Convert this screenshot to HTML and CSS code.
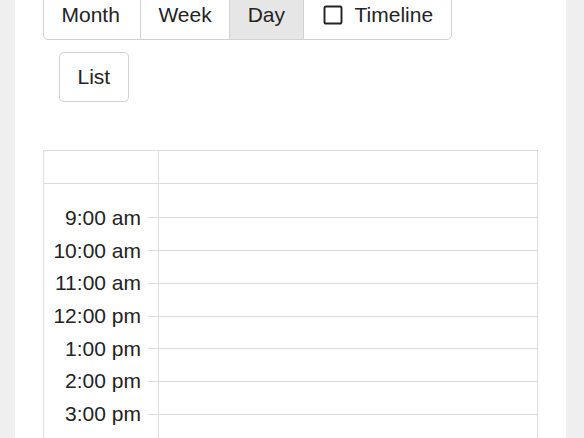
FILE: index.html
```html
<!DOCTYPE html>
<html>
<head>
<meta charset="utf-8">
<link rel="stylesheet" href="styles.css">
</head>
<body>
<div class="panel">
  <div class="toolbar">
    <div class="btn-group">
      <button class="btn">Month</button>
      <button class="btn">Week</button>
      <button class="btn active">Day</button>
      <button class="btn btn-check">
        <svg class="check-icon" width="24" height="24" viewBox="0 0 24 24"><rect x="3.5" y="3.5" width="17" height="17" rx="1.6" fill="none" stroke="#222" stroke-width="1.9"/></svg>
        <span>Timeline</span>
      </button>
    </div>
    <div class="btn-row">
      <button class="btn single">List</button>
    </div>
  </div>

  <div class="cal">
    <div class="cal-head">
      <div class="axis"></div>
      <div class="main"></div>
    </div>
    <div class="cal-body">
      <div class="slot spacer"><div class="axis"></div><div class="main"></div></div>
      <div class="slot"><div class="axis"><span class="label">9:00 am</span><span class="tick"></span></div><div class="main"><span class="line"></span></div></div>
      <div class="slot"><div class="axis"><span class="label">10:00 am</span><span class="tick"></span></div><div class="main"><span class="line"></span></div></div>
      <div class="slot"><div class="axis"><span class="label">11:00 am</span><span class="tick"></span></div><div class="main"><span class="line"></span></div></div>
      <div class="slot"><div class="axis"><span class="label">12:00 pm</span><span class="tick"></span></div><div class="main"><span class="line"></span></div></div>
      <div class="slot"><div class="axis"><span class="label">1:00 pm</span><span class="tick"></span></div><div class="main"><span class="line"></span></div></div>
      <div class="slot"><div class="axis"><span class="label">2:00 pm</span><span class="tick"></span></div><div class="main"><span class="line"></span></div></div>
      <div class="slot"><div class="axis"><span class="label">3:00 pm</span><span class="tick"></span></div><div class="main"><span class="line"></span></div></div>
      <div class="slot"><div class="axis"></div><div class="main"></div></div>
    </div>
  </div>
</div>
</body>
</html>
```

FILE: styles.css
```css
html, body {
  margin: 0;
  padding: 0;
  background: #efefef;
  overflow: hidden;
}

body {
  font-family: "Liberation Sans", Arial, sans-serif;
  color: #232323;
}

.panel {
  margin-left: 15px;
  width: 495px;
  padding: 0 28px 40px 28px;
  background: #ffffff;
  min-height: 480px;
}

.toolbar {
  margin-top: -10px;
}

.btn-group {
  display: inline-flex;
}

.btn {
  font-family: inherit;
  font-size: 21px;
  color: #232323;
  background: #ffffff;
  border: 1px solid #d2d2d2;
  height: 50px;
  padding: 0 17.5px;
  margin: 0;
  display: inline-flex;
  align-items: center;
  line-height: 48px;
}

.btn-group .btn + .btn {
  margin-left: -1px;
}

.btn-group .btn:first-child {
  border-radius: 0 0 0 5px;
  padding: 0 20px 0 17.5px;
}

.btn-group .btn:last-child {
  border-radius: 0 0 5px 0;
}

.btn.active {
  background: #e6e6e6;
}

.btn-check {
  gap: 9.5px;
}

.check-icon {
  display: block;
}

.btn-row {
  margin-top: 12px;
  padding-left: 16px;
}

.btn.single {
  border-radius: 5px;
}

.cal {
  margin-top: 48px;
  border: 1px solid #dddddd;
}

.cal-head {
  display: flex;
  height: 32px;
  border-bottom: 1px solid #dddddd;
}

.axis {
  width: 114px;
  border-right: 1px solid #dddddd;
  display: flex;
  align-items: center;
  justify-content: flex-end;
}

.main {
  flex: 1;
  display: flex;
  align-items: center;
}

.cal-body {
  display: flex;
  flex-direction: column;
}

.slot {
  display: flex;
  height: 32.7px;
}

.slot.spacer {
  height: 17.6px;
}

.label {
  font-size: 21px;
  white-space: nowrap;
  line-height: 24px;
}

.tick {
  width: 10px;
  height: 1px;
  margin-left: 7px;
  background: #dddddd;
}

.line {
  flex: 1;
  height: 1px;
  background: #dddddd;
}
```
